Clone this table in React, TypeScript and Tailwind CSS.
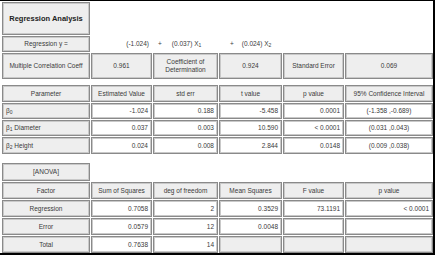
import * as React from "react";

type Cell = {
  text?: React.ReactNode;
  gray?: boolean;
  align?: "left" | "center" | "right";
  bold?: boolean;
};

const COLS = "grid grid-cols-[88px_61px_65px_63px_61px_88px] gap-x-[1px]";

function Box({ text, gray, align = "center", bold }: Cell) {
  const alignCls =
    align === "left" ? "justify-start pl-[3px]" : align === "right" ? "justify-end pr-[3px]" : "justify-center text-center";
  return (
    <div
      className={`flex h-full items-center border border-[#8a8a8a] shadow-[inset_1px_1px_0_#c9c9c9,inset_-1px_-1px_0_#c9c9c9] leading-[1.2] whitespace-nowrap ${alignCls} ${gray ? "bg-[#eeeeee]" : "bg-white"} ${bold ? "font-bold text-[7.5px] text-[#222]" : ""}`}
    >
      {text}
    </div>
  );
}

function Row({ cells, h }: { cells: Cell[]; h: string }) {
  return (
    <div className={`${COLS} ${h}`}>
      {cells.map((c, i) => (
        <Box key={i} {...c} />
      ))}
    </div>
  );
}

const B = ({ n }: { n: number }) => (
  <span>
    β<sub className="text-[5px]">{n}</sub>
  </span>
);

export default function App() {
  const g = (text: React.ReactNode, align: Cell["align"] = "center"): Cell => ({ text, gray: true, align });
  const w = (text?: React.ReactNode, align: Cell["align"] = "right"): Cell => ({ text, align });

  return (
    <div
      className="h-[255px] w-[435px] overflow-hidden border-t border-r-2 border-b-2 border-black bg-white pl-[2px] pt-[1px] text-[6.5px] text-[#3a3a3a]"
      style={{ fontFamily: '"Liberation Sans", Arial, sans-serif' }}
    >
      <div className="flex flex-col gap-y-[1px]">
        <div className={`${COLS} h-[33px]`}>
          <Box text="Regression Analysis" gray bold />
        </div>
        <div className={`${COLS} h-[16px]`}>
          <Box text="Regression y =" gray />
          <div className="flex items-center justify-end pr-[3px]">(-1.024)</div>
          <div className="flex items-center pl-[5px]">
            <span className="mr-[10px]">+</span>
            <span>
              (0.037) X<sub className="text-[5px]">1</sub>
            </span>
          </div>
          <div className="flex items-center pl-[11px]">
            <span className="mr-[8px]">+</span>
            <span>
              (0.024) X<sub className="text-[5px]">2</sub>
            </span>
          </div>
        </div>
        <Row
          h="h-[26px]"
          cells={[
            g("Multiple Correlation Coeff"),
            g("0.961"),
            g(
              <span>
                Coefficient of
                <br />
                Determination
              </span>,
            ),
            g("0.924"),
            g("Standard Error"),
            g("0.069"),
          ]}
        />
      </div>

      <div className="mt-[6px] flex flex-col gap-y-[1px]">
        <Row
          h="h-[17px]"
          cells={[g("Parameter"), g("Estimated Value"), g("std err"), g("t value"), g("p value"), g("95% Confidence Interval")]}
        />
        <Row
          h="h-[16px]"
          cells={[g(<B n={0} />, "left"), w("-1.024"), w("0.188"), w("-5.458"), w("0.0001"), w("(-1.358 ,-0.689)", "center")]}
        />
        <Row
          h="h-[16px]"
          cells={[
            g(
              <span>
                <B n={1} /> Diameter
              </span>,
              "left",
            ),
            w("0.037"),
            w("0.003"),
            w("10.590"),
            w("< 0.0001"),
            w("(0.031 ,0.043)", "center"),
          ]}
        />
        <Row
          h="h-[17px]"
          cells={[
            g(
              <span>
                <B n={2} /> Height
              </span>,
              "left",
            ),
            w("0.024"),
            w("0.008"),
            w("2.844"),
            w("0.0148"),
            w("(0.009 ,0.038)", "center"),
          ]}
        />
      </div>

      <div className="mt-[9px] flex flex-col gap-y-[1px]">
        <div className={`${COLS} h-[18px]`}>
          <Box text="[ANOVA]" gray />
        </div>
        <Row
          h="h-[17px]"
          cells={[g("Factor"), g("Sum of Squares"), g("deg of freedom"), g("Mean Squares"), g("F value"), g("p value")]}
        />
        <Row
          h="h-[17px]"
          cells={[g("Regression"), w("0.7058"), w("2"), w("0.3529"), w("73.1191"), w("< 0.0001")]}
        />
        <Row h="h-[17px]" cells={[g("Error"), w("0.0579"), w("12"), w("0.0048"), w(), w()]} />
        <Row h="h-[17px]" cells={[g("Total"), w("0.7638"), w("14"), g(""), g(""), g("")]} />
      </div>
    </div>
  );
}
